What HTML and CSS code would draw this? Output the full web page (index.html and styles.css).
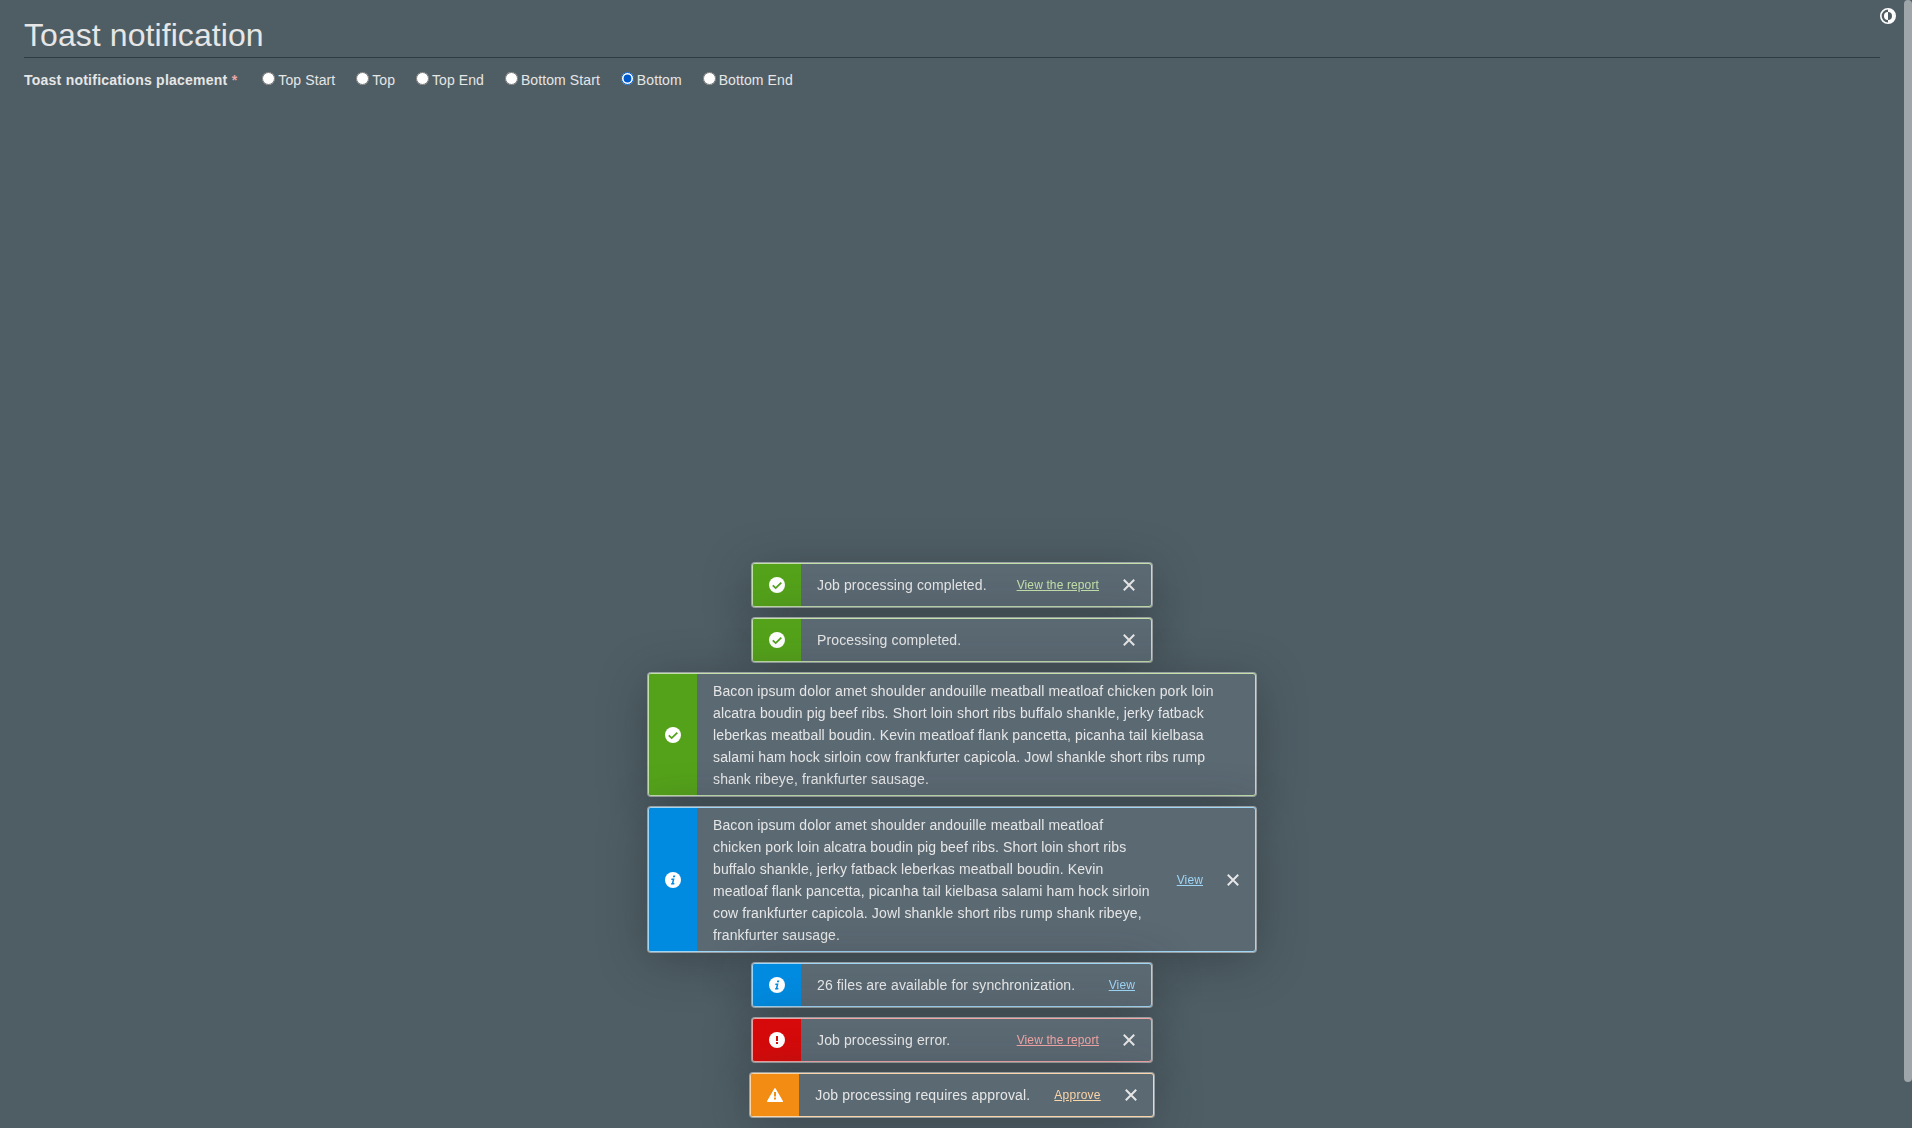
FILE: index.html
```html
<!DOCTYPE html>
<html lang="en">
<head>
<meta charset="utf-8">
<title>Toast notification</title>
<link rel="stylesheet" href="styles.css">
</head>
<body>
<svg class="sprite" aria-hidden="true">
  <symbol id="i-ok" viewBox="0 0 16 16"><circle cx="8" cy="8" r="8" fill="#fff"/><path d="M3.8 8.3 6.7 11.1 12.3 5.6" fill="none" stroke="currentColor" stroke-width="1.8"/></symbol>
  <symbol id="i-info" viewBox="0 0 16 16"><circle cx="8" cy="8" r="8" fill="#fff"/><path d="M8.3 3.500h2l-.4 1.800H7.900zM6.500 6.500h3l-1 4.600h1l-.3 1.400H6l.3-1.400h.6l.7-3.200H6.200z" fill="currentColor"/></symbol>
  <symbol id="i-error" viewBox="0 0 16 16"><circle cx="8" cy="8" r="8" fill="#fff"/><path d="M7 4h2v5H7zM7 10h2v2H7z" fill="currentColor"/></symbol>
  <symbol id="i-warn" viewBox="0 0 16 16"><path d="M8 1.800 15.300 14.300H.7z" fill="#fff" stroke="#fff" stroke-width="1.400" stroke-linejoin="round"/><path d="M7 5h2v4.500H7zM7 10.500h2v2H7z" fill="currentColor"/></symbol>
  <symbol id="i-close" viewBox="0 0 12 12"><path d="M.8.8 11.200 11.200M11.200.8.8 11.200" fill="none" stroke="currentColor" stroke-width="2"/></symbol>
</svg>

<main class="page">
  <h1>Toast notification</h1>
  <form class="placement">
    <span class="legend">Toast notifications placement <span class="required">*</span></span>
    <label><input type="radio" name="p">Top Start</label>
    <label><input type="radio" name="p">Top</label>
    <label><input type="radio" name="p">Top End</label>
    <label><input type="radio" name="p">Bottom Start</label>
    <label><input type="radio" name="p" checked>Bottom</label>
    <label><input type="radio" name="p">Bottom End</label>
  </form>
</main>

<svg class="theme-toggle" viewBox="0 0 16 16"><circle cx="8" cy="8" r="7.200" fill="none" stroke="#fff" stroke-width="1.600"/><path d="M8 1a7 7 0 0 1 0 14V12a4 4 0 0 0 0-8z" fill="#fff"/><path d="M8 4a4 4 0 0 0 0 8z" fill="#fff"/></svg>
<div class="scroll-thumb"></div>

<section class="toasts">
  <div class="toast success">
    <div class="icon"><svg><use href="#i-ok"/></svg></div>
    <p>Job processing completed.</p><a>View the report</a>
    <button><svg><use href="#i-close"/></svg></button>
  </div>
  <div class="toast success">
    <div class="icon"><svg><use href="#i-ok"/></svg></div>
    <p>Processing completed.</p>
    <button><svg><use href="#i-close"/></svg></button>
  </div>
  <div class="toast success wide">
    <div class="icon"><svg><use href="#i-ok"/></svg></div>
    <p>Bacon ipsum dolor amet shoulder andouille meatball meatloaf chicken pork loin alcatra boudin pig beef ribs. Short loin short ribs buffalo shankle, jerky fatback leberkas meatball boudin. Kevin meatloaf flank pancetta, picanha tail kielbasa salami ham hock sirloin cow frankfurter capicola. Jowl shankle short ribs rump shank ribeye, frankfurter sausage.</p>
  </div>
  <div class="toast info wide">
    <div class="icon"><svg><use href="#i-info"/></svg></div>
    <p>Bacon ipsum dolor amet shoulder andouille meatball meatloaf chicken pork loin alcatra boudin pig beef ribs. Short loin short ribs buffalo shankle, jerky fatback leberkas meatball boudin. Kevin meatloaf flank pancetta, picanha tail kielbasa salami ham hock sirloin cow frankfurter capicola. Jowl shankle short ribs rump shank ribeye, frankfurter sausage.</p><a>View</a>
    <button><svg><use href="#i-close"/></svg></button>
  </div>
  <div class="toast info">
    <div class="icon"><svg><use href="#i-info"/></svg></div>
    <p>26 files are available for synchronization.</p><a>View</a>
  </div>
  <div class="toast danger">
    <div class="icon"><svg><use href="#i-error"/></svg></div>
    <p>Job processing error.</p><a>View the report</a>
    <button><svg><use href="#i-close"/></svg></button>
  </div>
  <div class="toast warning">
    <div class="icon"><svg><use href="#i-warn"/></svg></div>
    <p>Job processing requires approval.</p><a>Approve</a>
    <button><svg><use href="#i-close"/></svg></button>
  </div>
</section>
</body>
</html>
```
FILE: styles.css
```css
* { box-sizing: border-box; }
body {
  margin: 0;
  height: 1128px;
  overflow: hidden;
  background: #4f5e65;
  color: #e6e6e6;
  font: 14px/22px "Liberation Sans", Arial, sans-serif;
  font-feature-settings: "liga" 1;
  letter-spacing: .125px;
}
.sprite { position: absolute; width: 0; height: 0; }
.page { padding: 16px 32px 0 24px; }
h1 {
  margin: 0;
  height: 42px;
  border-bottom: 1px solid #2d3c43;
  font-size: 32px;
  line-height: 38px;
  font-weight: 400;
  letter-spacing: .07px;
}
.placement { display: flex; padding-top: 11px; letter-spacing: .1px; }
.legend { font-weight: 700; margin-right: 25px; letter-spacing: .24px; }
.required { color: #eda6a6; }
label { margin-right: 20.9px; }
input { width: 13px; height: 13px; margin: 0 3px 0 0; vertical-align: 0; accent-color: #0059c8; }
.theme-toggle { position: absolute; left: 1880px; top: 8px; width: 16px; height: 16px; }
.scroll-thumb { position: absolute; right: 0; top: 0; width: 8px; height: 1082px; border-radius: 4px; background: #9ea6aa; }

.toasts {
  position: fixed;
  left: 0;
  bottom: 11px;
  width: 1904px;
  display: flex;
  flex-direction: column;
  align-items: center;
  gap: 11px;
}
.toast {
  display: flex;
  align-items: stretch;
  min-width: 400px;
  max-width: 608px;
  min-height: 44px;
  border: 1px solid var(--line);
  border-radius: 3px;
  background: #5b6973;
  box-shadow: 0 0 0 1px rgba(210, 212, 212, .6), 0 8px 48px rgba(36, 44, 48, .46);
}
.icon { flex: none; width: 48px; display: flex; align-items: center; justify-content: center; background: var(--fill); color: var(--fill); border-radius: 2px 0 0 2px; }
.icon svg { width: 16px; height: 16px; }
.toast p { flex: 1; margin: 0; padding: 6px 8px 6px 16px; align-self: center; }
.toast.wide p { padding-bottom: 5px; }
.toast p:last-child { padding-right: 24px; }
.toast a { align-self: center; margin: 0 16px; font-size: 12px; text-decoration: underline; color: var(--line); flex: none; }
button { align-self: center; flex: none; margin: 0 16px 0 8px; padding: 0; width: 12px; height: 12px; border: 0; background: none; color: #e6e6e6; display: flex; }
button svg { width: 12px; height: 12px; }
.success { --fill: #54a21a; --line: #c3e0ab; }
.info { --fill: #008be1; --line: #9fd5f5; }
.danger { --fill: #d60a0a; --line: #f0a5a5; }
.warning { --fill: #f28c13; --line: #fad5a8; }
.warning p { letter-spacing: .15px; }
.toast.warning a { letter-spacing: .24px; }
```
